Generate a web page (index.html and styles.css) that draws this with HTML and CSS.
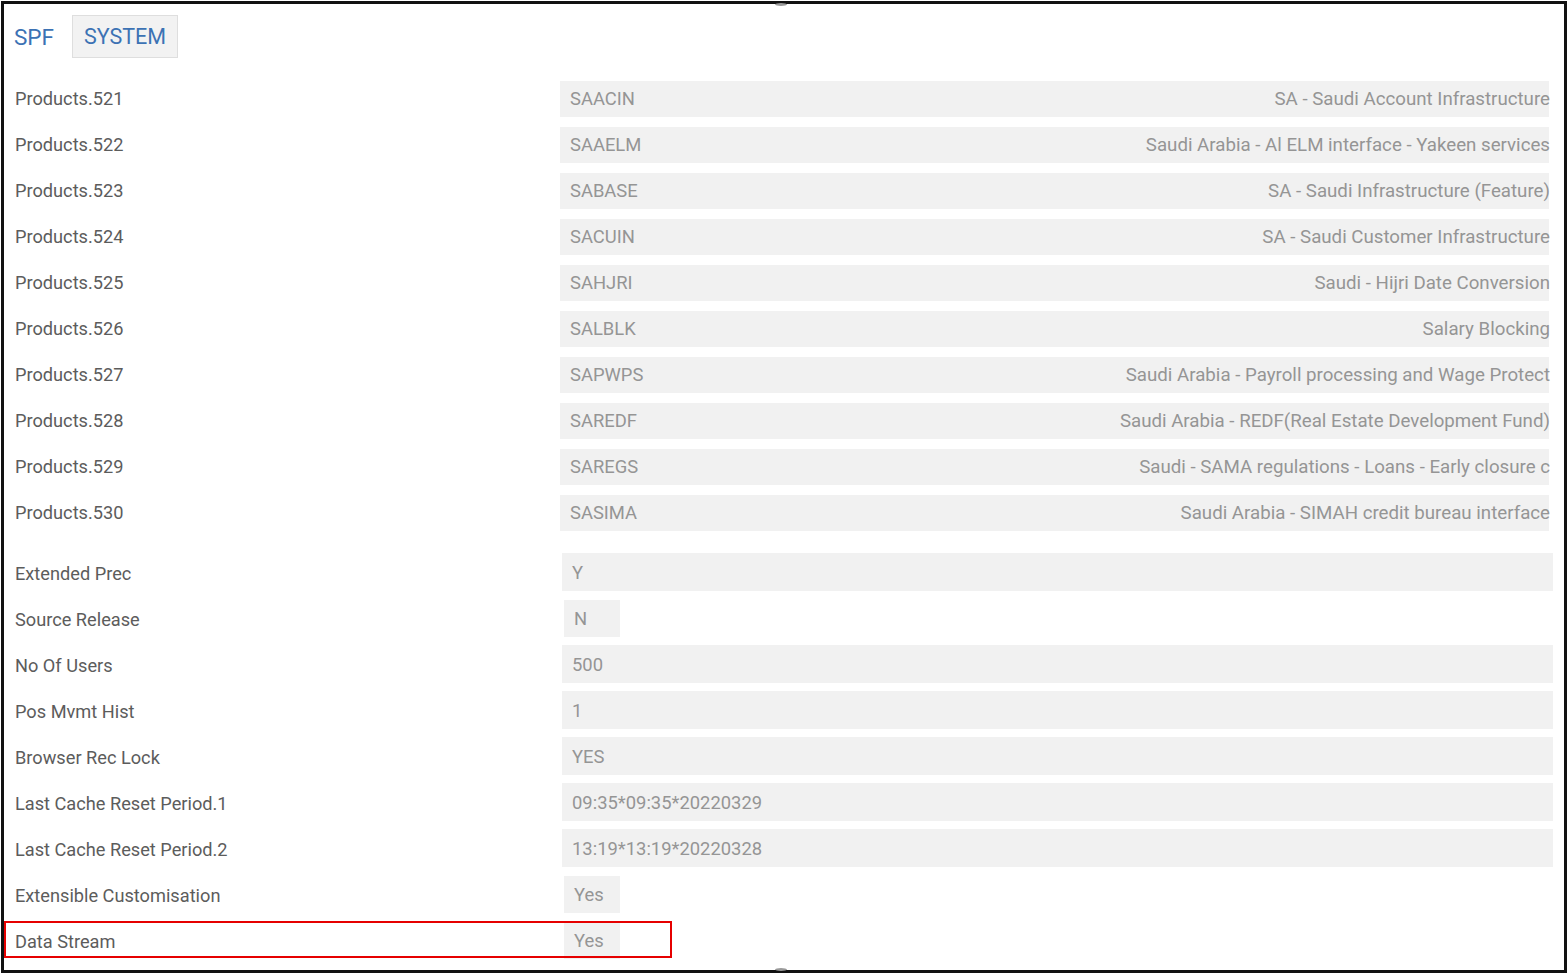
FILE: index.html
```html
<!DOCTYPE html>
<html lang="en">
<head>
    <meta charset="UTF-8">
    <title>SPF - SYSTEM</title>
    <link rel="stylesheet" href="styles.css">
</head>
<body>
    <div class="frame">
        <span class="scroll-mark top"></span>
        <span class="scroll-mark bottom"></span>

        <div class="tabs">
            <span class="tab-title">SPF</span>
            <span class="tab">SYSTEM</span>
        </div>

        <div class="products">
            <div class="row">
                <div class="label">Products.521</div>
                <div class="field"><span class="code">SAACIN</span><span class="desc">SA - Saudi Account Infrastructure</span></div>
            </div>
            <div class="row">
                <div class="label">Products.522</div>
                <div class="field"><span class="code">SAAELM</span><span class="desc">Saudi Arabia - Al ELM interface - Yakeen services</span></div>
            </div>
            <div class="row">
                <div class="label">Products.523</div>
                <div class="field"><span class="code">SABASE</span><span class="desc">SA - Saudi Infrastructure (Feature)</span></div>
            </div>
            <div class="row">
                <div class="label">Products.524</div>
                <div class="field"><span class="code">SACUIN</span><span class="desc">SA - Saudi Customer Infrastructure</span></div>
            </div>
            <div class="row">
                <div class="label">Products.525</div>
                <div class="field"><span class="code">SAHJRI</span><span class="desc">Saudi - Hijri Date Conversion</span></div>
            </div>
            <div class="row">
                <div class="label">Products.526</div>
                <div class="field"><span class="code">SALBLK</span><span class="desc">Salary Blocking</span></div>
            </div>
            <div class="row">
                <div class="label">Products.527</div>
                <div class="field"><span class="code">SAPWPS</span><span class="desc">Saudi Arabia - Payroll processing and Wage Protect</span></div>
            </div>
            <div class="row">
                <div class="label">Products.528</div>
                <div class="field"><span class="code">SAREDF</span><span class="desc">Saudi Arabia - REDF(Real Estate Development Fund)</span></div>
            </div>
            <div class="row">
                <div class="label">Products.529</div>
                <div class="field"><span class="code">SAREGS</span><span class="desc">Saudi - SAMA regulations - Loans - Early closure c</span></div>
            </div>
            <div class="row">
                <div class="label">Products.530</div>
                <div class="field"><span class="code">SASIMA</span><span class="desc">Saudi Arabia - SIMAH credit bureau interface</span></div>
            </div>
        </div>

        <div class="settings">
            <div class="row">
                <div class="label">Extended Prec</div>
                <div class="field wide">Y</div>
            </div>
            <div class="row">
                <div class="label">Source Release</div>
                <div class="field small">N</div>
            </div>
            <div class="row">
                <div class="label">No Of Users</div>
                <div class="field wide">500</div>
            </div>
            <div class="row">
                <div class="label">Pos Mvmt Hist</div>
                <div class="field wide">1</div>
            </div>
            <div class="row">
                <div class="label">Browser Rec Lock</div>
                <div class="field wide">YES</div>
            </div>
            <div class="row">
                <div class="label">Last Cache Reset Period.1</div>
                <div class="field wide">09:35*09:35*20220329</div>
            </div>
            <div class="row">
                <div class="label">Last Cache Reset Period.2</div>
                <div class="field wide">13:19*13:19*20220328</div>
            </div>
            <div class="row">
                <div class="label">Extensible Customisation</div>
                <div class="field small">Yes</div>
            </div>
            <div class="row highlighted">
                <div class="label">Data Stream</div>
                <div class="field small">Yes</div>
            </div>
        </div>
    </div>
</body>
</html>
```

FILE: styles.css
```css
html, body {
    margin: 0;
    padding: 0;
    background-color: #ffffff;
}
body {
    font-family: Roboto, "Liberation Sans", Arial, sans-serif;
    font-size: 18px;
    width: 1568px;
    height: 975px;
    overflow: hidden;
}
.frame {
    position: relative;
    box-sizing: border-box;
    margin: 1px;
    width: 1566px;
    height: 972px;
    border: 3px solid #111111;
    padding: 11px 0 0 11px;
}
.scroll-mark {
    position: absolute;
    left: 771px;
    width: 12px;
    height: 3px;
    border-radius: 50%;
    background-color: #9a9a9a;
}
.scroll-mark.top {
    top: -1px;
}
.scroll-mark.bottom {
    bottom: -1px;
}
.tabs {
    display: flex;
    align-items: center;
    height: 43px;
    gap: 18px;
}
.tab-title {
    color: #3c72b4;
    font-size: 22.5px;
    margin-left: -1px;
    padding-top: 1px;
}
.tab {
    box-sizing: border-box;
    height: 43px;
    width: 106px;
    display: flex;
    align-items: center;
    justify-content: center;
    background-color: #f2f2f2;
    border: 1px solid #dedede;
    color: #3c72b4;
    font-size: 21.5px;
}
.products {
    margin-top: 18px;
}
.row {
    display: flex;
    align-items: center;
    height: 46px;
}
.label {
    width: 545px;
    flex-shrink: 0;
    color: #5c5c5c;
    font-size: 18.2px;
    padding-top: 2px;
}
.field {
    box-sizing: border-box;
    background-color: #f1f1f1;
    color: #959595;
    font-size: 18.4px;
    padding: 0 10px;
    padding-top: 1px;
    display: flex;
    align-items: center;
}
.products .field {
    width: 989px;
    height: 36px;
    justify-content: space-between;
    padding-right: 0;
    padding-top: 0;
    padding-bottom: 1px;
}
.products .label {
    padding-top: 0;
    padding-bottom: 1px;
}
.desc {
    white-space: nowrap;
    font-size: 18.7px;
    margin-right: -1px;
}
.settings {
    margin-top: 13px;
}
.settings .label {
    width: 547px;
}
.field.wide {
    width: 991px;
    height: 38px;
}
.field.small {
    width: 56px;
    height: 37px;
    margin-left: 2px;
}
.highlighted {
    position: relative;
}
.highlighted::after {
    content: "";
    position: absolute;
    left: -11px;
    top: 4px;
    width: 668px;
    height: 37px;
    box-sizing: border-box;
    border: 2px solid #e60000;
}
```
